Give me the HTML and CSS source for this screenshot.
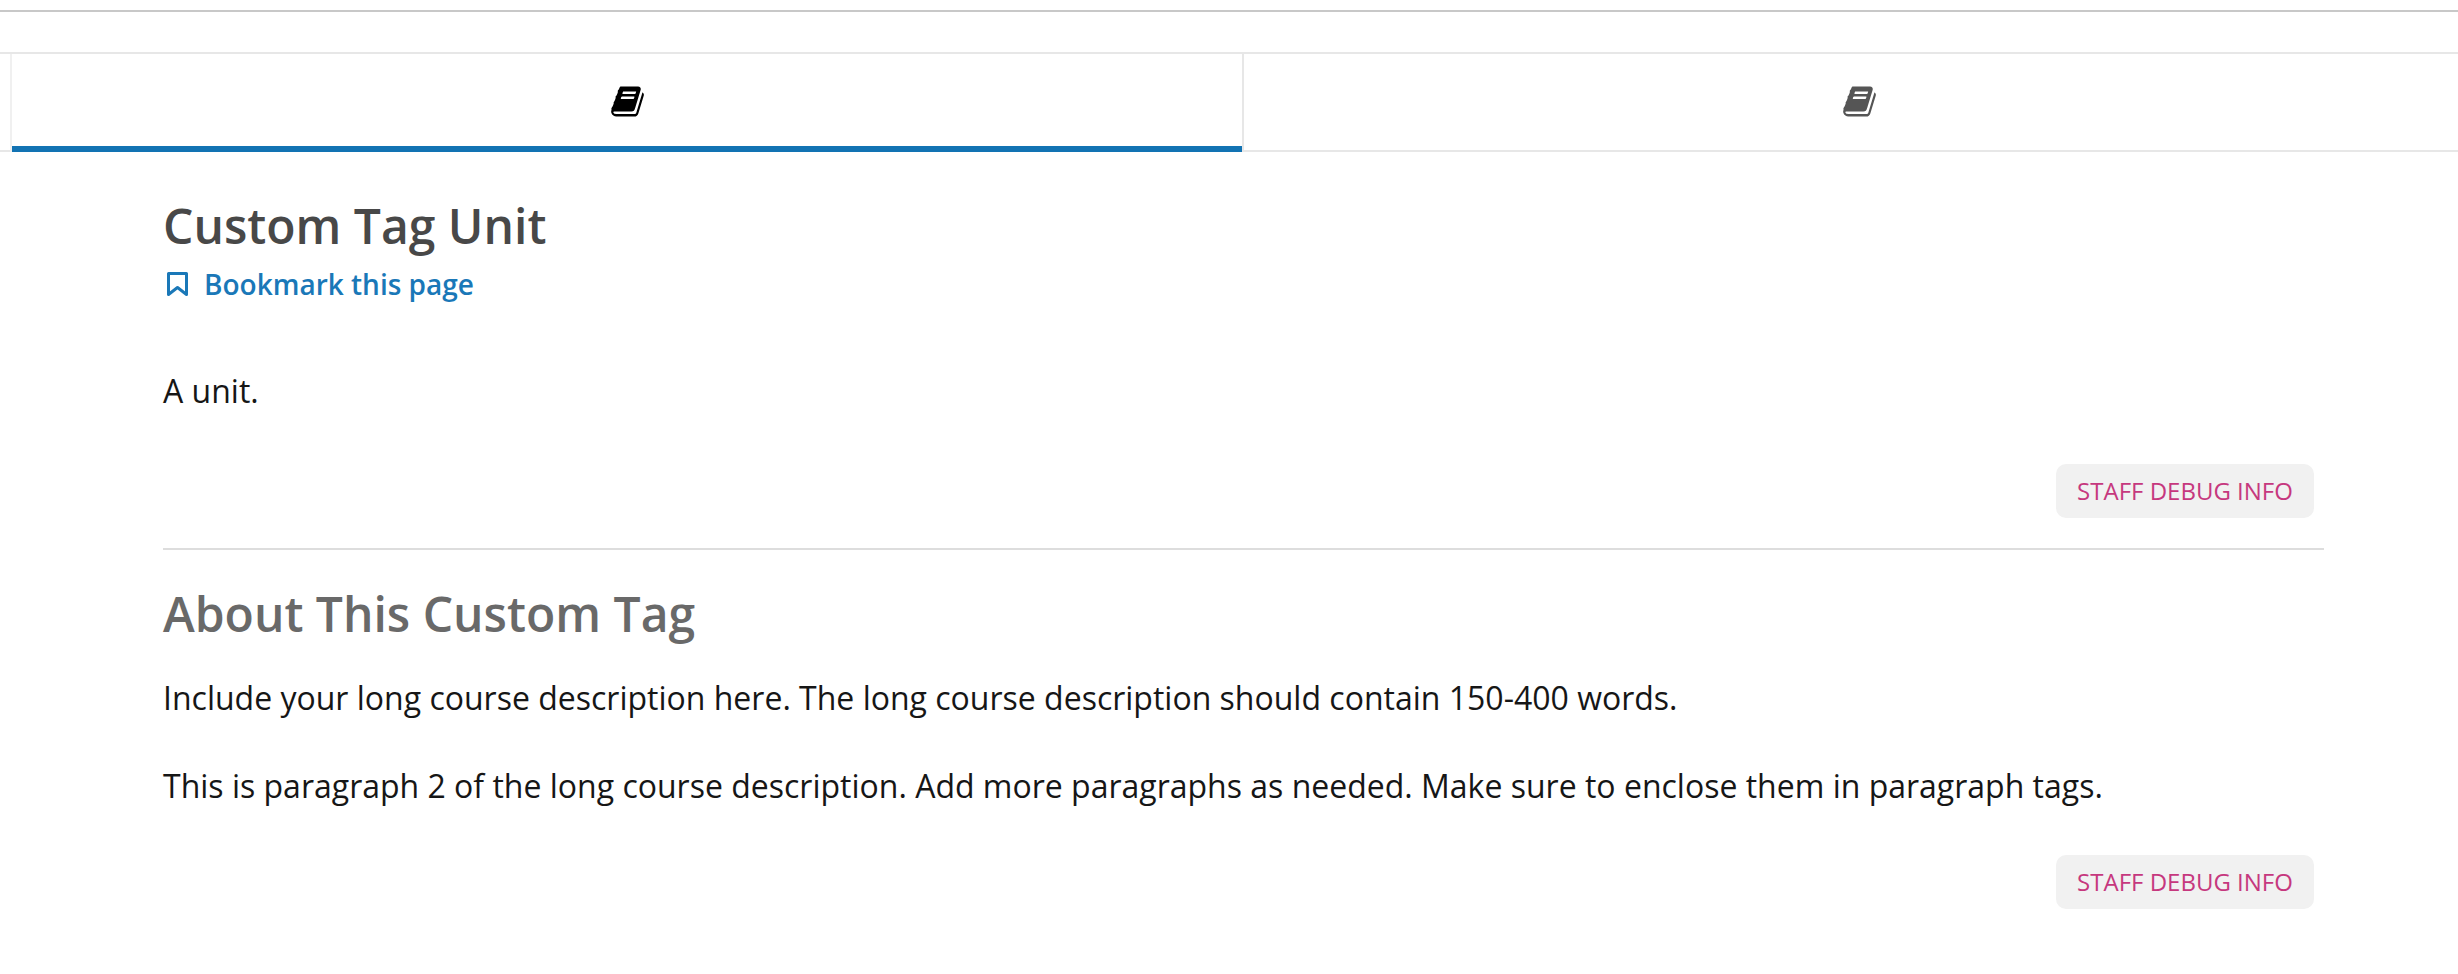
FILE: index.html
```html
<!DOCTYPE html>
<html lang="en">
<head>
<meta charset="utf-8">
<title>Custom Tag Unit</title>
<link rel="stylesheet" href="styles.css">
</head>
<body>
<svg class="sprite" width="0" height="0" aria-hidden="true">
  <symbol id="book" viewBox="55 125 1680 1545">
    <path d="M1703 478q40 57 18 129l-275 906q-19 64-76.5 107.5t-122.5 43.5h-923q-77 0-148.5-53.5t-99.5-131.5q-24-67-2-127 0-4 3-27t4-37q1-8-3-21.5t-3-19.5q2-11 8-21t16.5-23.5 16.5-23.5q23-38 45-91.5t30-91.5q3-10 .5-30t-.5-28q3-11 17-28t17-23q21-36 42-92t25-90q1-9-2.5-32t.5-28q4-13 22-30.5t22-22.5q19-26 42.5-84.5t27.5-96.5q1-8-3-25.5t-2-26.5q2-8 9-18t18-23 17-21q8-12 16.5-30.5t15-35 16-36 19.5-32 26.5-23.5 36-11.5 47.5 5.5l-1 3q38-9 51-9h761q74 0 114 56t18 130l-274 906q-36 119-71.5 153.5t-128.5 34.5h-869q-27 0-38 15-11 16-1 43 24 70 144 70h923q29 0 56-15.5t35-41.5l300-987q7-22 5-57 38 15 59 43zm-1064 2q-4 13 2 22.5t20 9.5h608q13 0 25.5-9.5t16.5-22.5l21-64q4-13-2-22.5t-20-9.5h-608q-13 0-25.5 9.5t-16.5 22.5zm-83 256q-4 13 2 22.5t20 9.5h608q13 0 25.5-9.5t16.5-22.5l21-64q4-13-2-22.5t-20-9.5h-608q-13 0-25.5 9.5t-16.5 22.5z"/>
  </symbol>
</svg>
<div class="top-rule"></div>
<nav class="tabs">
  <a class="tab tab-active"><svg class="book"><use href="#book"/></svg></a>
  <a class="tab"><svg class="book"><use href="#book"/></svg></a>
</nav>
<main class="content">
  <section class="unit">
    <h1 class="unit-title">Custom Tag Unit</h1>
    <a class="bookmark">
      <svg class="bookmark-icon" viewBox="0 0 21 24"><path d="M1.500 1.500h18v21l-9-7-9 7z"/></svg>
      <span>Bookmark this page</span>
    </a>
    <p class="unit-text">A unit.</p>
    <div class="debug-row"><button class="debug">STAFF DEBUG INFO</button></div>
  </section>
  <section class="about">
    <h2 class="about-title">About This Custom Tag</h2>
    <p class="about-text">Include your long course description here. The long course description should contain 150-400 words.</p>
    <p class="about-text about-second">This is paragraph 2 of the long course description. Add more paragraphs as needed. Make sure to enclose them in paragraph tags.</p>
    <div class="debug-row debug-row-about"><button class="debug">STAFF DEBUG INFO</button></div>
  </section>
</main>
</body>
</html>
```
FILE: styles.css
```css
html, body {
  margin: 0;
  padding: 0;
  background: #fff;
}
body {
  font-family: "Open Sans", "Noto Sans", sans-serif;
  color: #161616;
  height: 974px;
  overflow: hidden;
}
.sprite {
  display: block;
  height: 0;
}
.top-rule {
  height: 2px;
  margin-top: 10px;
  background: #c8c8c8;
}
.tabs {
  display: flex;
  box-sizing: border-box;
  width: 2458px;
  height: 100px;
  margin-top: 40px;
  padding-left: 10px;
  border-top: 2px solid #e7e7e7;
  border-bottom: 2px solid #e7e7e7;
}
.tab {
  flex: none;
  box-sizing: border-box;
  width: 1232px;
  height: 96px;
  display: flex;
  align-items: flex-start;
  justify-content: center;
  padding-top: 32px;
  border-left: 2px solid #f0f0f0;
  color: #555;
}
.tab + .tab {
  border-left: 2px solid #e7e7e7;
}
.tab-active {
  color: #000;
  height: 98px;
  box-shadow: inset 0 -6px 0 #1273b3;
}
.book {
  width: 33px;
  height: 31px;
  fill: currentColor;
}
.content {
  box-sizing: border-box;
  width: 2161px;
  margin-left: 163px;
}
.unit {
  border-bottom: 2px solid #ddd;
  height: 398px;
  box-sizing: border-box;
}
.unit-title {
  margin: 0;
  padding-top: 44px;
  font-size: 48px;
  line-height: 60px;
  font-weight: 600;
  color: #484848;
}
.bookmark {
  display: flex;
  align-items: center;
  gap: 16px;
  margin-top: 10px;
  padding-left: 4px;
  font-size: 28px;
  line-height: 36px;
  font-weight: 600;
  color: #1a78b8;
}
.bookmark-icon {
  width: 21px;
  height: 24px;
  fill: none;
  stroke: currentColor;
  stroke-width: 3;
  stroke-linejoin: round;
}
.unit-text {
  margin: 68px 0 0;
  font-size: 32px;
  line-height: 42px;
}
.debug-row {
  display: flex;
  justify-content: flex-end;
  padding-right: 10px;
  margin-top: 52px;
}
.debug {
  box-sizing: border-box;
  width: 258px;
  height: 54px;
  padding: 0 0 2px;
  border: 0;
  border-radius: 10px;
  background: #f1f1f1;
  color: #c6387e;
  font-family: inherit;
  font-size: 24px;
  font-weight: 400;
}
.about-title {
  margin: 0;
  padding-top: 34px;
  font-size: 48px;
  line-height: 60px;
  font-weight: 600;
  color: #696969;
}
.about-text {
  margin: 32px 0 0;
  font-size: 32px;
  line-height: 44px;
}
.about-second {
  margin-top: 44px;
}
.debug-row-about {
  margin-top: 47px;
}
```
